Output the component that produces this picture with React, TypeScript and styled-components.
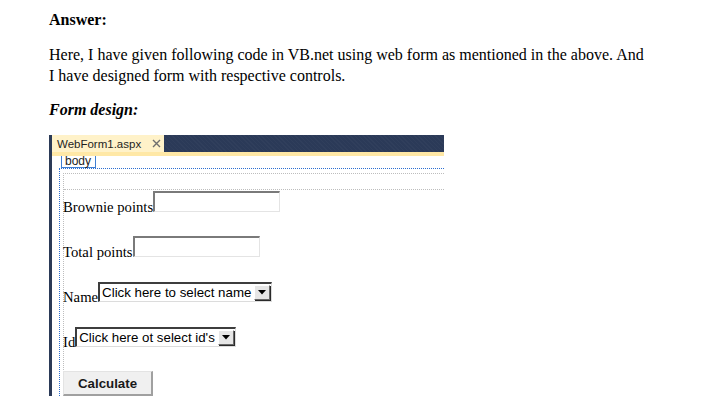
import * as React from 'react'
import styled, {createGlobalStyle} from 'styled-components'

const GlobalStyle = createGlobalStyle`
  html, body {
    margin: 0;
    padding: 0;
    background: #fff;
  }
  body {
    font-family: "Liberation Serif", "Times New Roman", serif;
    color: #000;
  }
`

const Page = styled.main`
  padding: 9px 0 0 49px;
`

const Heading = styled.p<{$italic?: boolean}>`
  margin: 0;
  font-size: 16px;
  line-height: 21px;
  font-weight: bold;
  font-style: ${(p): string => p.$italic ? 'italic' : 'normal'};
`

const Paragraph = styled.p`
  margin: 14px 0 13px;
  width: 600px;
  font-size: 16px;
  line-height: 21px;
`

const Designer = styled.section`
  margin-top: 15px;
  width: 392px;
  height: 261px;
  border-left: 3px solid #2b3a57;
  display: flex;
  flex-direction: column;
  overflow: hidden;
  background: #fff;
`

const TabStrip = styled.div`
  display: flex;
  height: 18px;
  background-color: #2b3a58;
  background-image:
    repeating-linear-gradient(45deg, rgba(255, 255, 255, 0.025) 0 1px, transparent 1px 3px);
`

const Tab = styled.div`
  width: 112px;
  box-sizing: border-box;
  padding: 0 0 0 5px;
  display: flex;
  align-items: center;
  gap: 11px;
  background: #fff2c9;
  color: #1e1e1e;
  font-family: "Liberation Sans", Arial, sans-serif;
  font-size: 11.5px;
`

const Band = styled.div`
  height: 4px;
  background: #ffe8a6;
`

const Surface = styled.div`
  flex: 1;
  display: flex;
  flex-direction: column;
  padding-left: 7px;
`

const TagLabel = styled.span`
  align-self: flex-start;
  margin-left: 2px;
  height: 11px;
  padding: 0 4px 0 3px;
  border: 1px solid #3f7fd3;
  border-top: none;
  font-family: "Liberation Sans", Arial, sans-serif;
  font-size: 12px;
  line-height: 10px;
  color: #222;
`

const BodyOutline = styled.div`
  flex: 1;
  border-top: 1px dotted #2d6fd1;
  border-left: 1px dotted #2d6fd1;
  padding: 4px 0 0 3px;
  display: flex;
  flex-direction: column;
`

const FormOutline = styled.div`
  flex: 1;
  border-top: 1px dotted #bdbdbd;
  border-left: 1px dotted #bdbdbd;
`

const EmptyBlock = styled.div`
  height: 15px;
  border-bottom: 1px dotted #bdbdbd;
`

const Rows = styled.div`
  display: flex;
  flex-direction: column;
  gap: 24px;
  padding-top: 1px;
  margin-left: -1px;
`

const Row = styled.div<{$height?: number}>`
  display: flex;
  align-items: flex-end;
  height: ${(p): number => p.$height ?? 21}px;
`

const Label = styled.span`
  font-size: 14.7px;
  line-height: 16px;
  margin-bottom: -3px;
  white-space: nowrap;
`

const TextBox = styled.input`
  box-sizing: border-box;
  width: 127px;
  height: 21px;
  margin: 0;
  padding: 0;
  background: #fff;
  border-top: 2px solid #7a7a7a;
  border-left: 2px solid #7a7a7a;
  border-right: 1px solid #e4e4e4;
  border-bottom: 1px solid #e4e4e4;
  outline: none;
`

const SelectFrame = styled.div<{$width: number}>`
  box-sizing: border-box;
  width: ${(p): number => p.$width}px;
  height: 20px;
  display: flex;
  align-items: center;
  justify-content: space-between;
  background: #fff;
  border-top: 2px solid #3d3d3d;
  border-left: 2px solid #3d3d3d;
  border-right: 1px solid #dcdcdc;
  border-bottom: 1px solid #dcdcdc;
  padding: 0 1px 0 2px;
`

const SelectText = styled.span`
  font-family: "Liberation Sans", Arial, sans-serif;
  font-size: 13.3px;
  line-height: 16px;
  color: #000;
  white-space: nowrap;
`

const ArrowButton = styled.span`
  box-sizing: border-box;
  width: 16px;
  height: 15px;
  display: flex;
  align-items: center;
  justify-content: center;
  background: #e6e6e6;
  border-top: 1px solid #fff;
  border-left: 1px solid #fff;
  border-right: 1px solid #6a6a6a;
  border-bottom: 1px solid #6a6a6a;
  box-shadow: 1px 1px 0 #2a2a2a;
`

const Button = styled.button`
  box-sizing: border-box;
  width: 90px;
  height: 25px;
  margin: 0;
  padding: 0;
  background: #f0f0f0;
  border-top: 1px solid #e3e3e3;
  border-left: 1px solid #e3e3e3;
  border-right: 2px solid #a0a0a0;
  border-bottom: 2px solid #a0a0a0;
  font-family: "Liberation Sans", Arial, sans-serif;
  font-size: 13.3px;
  font-weight: bold;
  color: #1a1a1a;
`

const CloseIcon = (): JSX.Element => (
  <svg width='9' height='9' viewBox='0 0 9 9'>
    <path d='M1 1 L8 8 M8 1 L1 8' stroke='#6e6e6e' strokeWidth='1.4' fill='none' />
  </svg>
)

const Triangle = (): JSX.Element => (
  <svg width='8' height='5' viewBox='0 0 8 5'>
    <path d='M0 0 H8 L4 4.5 Z' fill='#000' />
  </svg>
)

const FakeSelect = ({width, text}: {width: number, text: string}): JSX.Element => (
  <SelectFrame $width={width}>
    <SelectText>{text}</SelectText>
    <ArrowButton><Triangle /></ArrowButton>
  </SelectFrame>
)

const App = (): JSX.Element => (
  <Page>
    <GlobalStyle />
    <Heading>Answer:</Heading>
    <Paragraph>
      Here, I have given following code in VB.net using web form as mentioned in the above. And
      I have designed form with respective controls.
    </Paragraph>
    <Heading $italic>Form design:</Heading>
    <Designer>
      <TabStrip>
        <Tab>
          <span>WebForm1.aspx</span>
          <CloseIcon />
        </Tab>
      </TabStrip>
      <Band />
      <Surface>
        <TagLabel>body</TagLabel>
        <BodyOutline>
          <FormOutline>
            <EmptyBlock />
            <Rows>
              <Row>
                <Label>Brownie points</Label>
                <TextBox type='text' />
              </Row>
              <Row>
                <Label>Total points</Label>
                <TextBox type='text' />
              </Row>
              <Row>
                <Label>Name</Label>
                <FakeSelect width={174} text='Click here to select name' />
              </Row>
              <Row>
                <Label>Id</Label>
                <FakeSelect width={161} text="Click here ot select id's" />
              </Row>
              <Row $height={25}>
                <Button>Calculate</Button>
              </Row>
            </Rows>
          </FormOutline>
        </BodyOutline>
      </Surface>
    </Designer>
  </Page>
)

export default App
